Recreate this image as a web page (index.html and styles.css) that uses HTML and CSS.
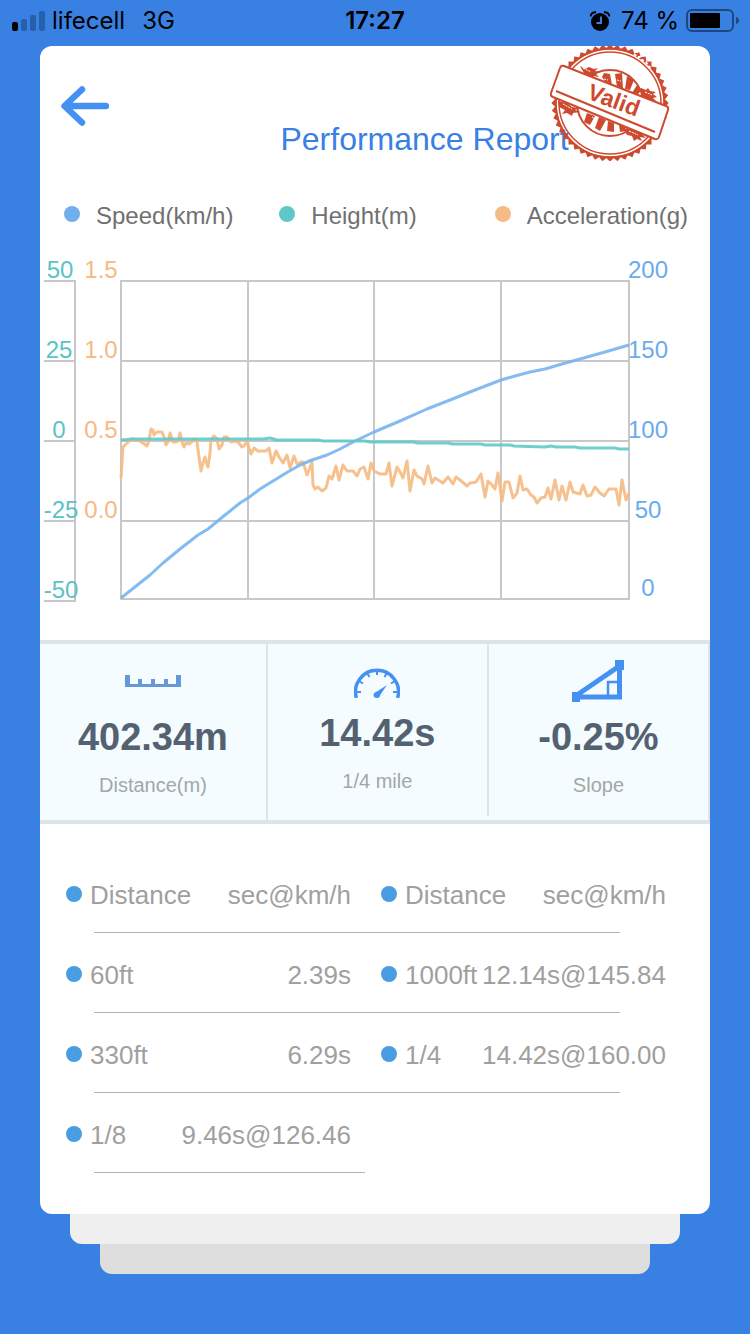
FILE: index.html
```html
<!DOCTYPE html>
<html lang="en">
<head>
  <meta charset="UTF-8">
  <meta name="viewport" content="width=device-width, initial-scale=1">
  <title>Performance Report</title>
  <link rel="stylesheet" href="styles.css">
</head>
<body>

  <div class="status-bar">
    <div class="status-left">
      <svg class="signal" width="34" height="20" viewBox="0 0 34 20" aria-hidden="true">
        <rect x="1" y="11" width="6" height="9" rx="2" fill="#000"/>
        <rect x="10" y="8" width="6" height="12" rx="2" fill="#2760aa"/>
        <rect x="19" y="4" width="6" height="16" rx="2" fill="#2760aa"/>
        <rect x="28" y="0" width="6" height="20" rx="2" fill="#2760aa"/>
      </svg>
      <span>lifecell</span>
      <span class="network">3G</span>
    </div>
    <div class="status-time">17:27</div>
    <div class="status-right">
      <svg width="20" height="20" viewBox="0 0 20 20" aria-hidden="true">
        <circle cx="10" cy="11" r="9"/>
        <path d="M0.500 5.500Q1 1.500 6 1M14 1Q19 1.500 19.500 5.500" fill="none" stroke="#000" stroke-width="2"/>
        <path d="M11 5.500V12H6.500" fill="none" stroke="#3880e2" stroke-width="2"/>
      </svg>
      <span>74 %</span>
      <svg width="53" height="24" viewBox="0 0 53 24" aria-hidden="true">
        <rect x="1" y="1" width="46" height="21" rx="5" fill="none" stroke="#1f477e" stroke-width="2"/>
        <rect x="4" y="4" width="30" height="15" rx="1"/>
        <path d="M50 8Q53 9 53 11.500T50 15Z" fill="#1f477e"/>
      </svg>
    </div>
  </div>

  <main class="card">
    <header class="card-header">
      <button type="button" class="back" aria-label="Back">
        <svg width="48" height="40" viewBox="0 0 48 40">
          <path d="M21 3.500L3.500 20L21 36.500M4 20H45" fill="none" stroke="#4591f2" stroke-width="6.500" stroke-linecap="round" stroke-linejoin="round"/>
        </svg>
      </button>
      <h1>Performance Report</h1>

      <svg class="stamp" width="120" height="115" viewBox="0 0 120 115">
        <defs>
          <mask id="rim">
            <rect width="120" height="115" fill="#fff"/>
            <circle cx="60" cy="57" r="53.500" fill="#000"/>
          </mask>
          <rect id="tooth" x="18.500" y="15.500" width="83" height="83"/>
        </defs>
        <g fill="#cd4a2f" mask="url(#rim)">
          <use href="#tooth"/>
          <use href="#tooth" transform="rotate(7.5 60 57)"/>
          <use href="#tooth" transform="rotate(15 60 57)"/>
          <use href="#tooth" transform="rotate(22.5 60 57)"/>
          <use href="#tooth" transform="rotate(30 60 57)"/>
          <use href="#tooth" transform="rotate(37.5 60 57)"/>
          <use href="#tooth" transform="rotate(45 60 57)"/>
          <use href="#tooth" transform="rotate(52.5 60 57)"/>
          <use href="#tooth" transform="rotate(60 60 57)"/>
          <use href="#tooth" transform="rotate(67.5 60 57)"/>
          <use href="#tooth" transform="rotate(75 60 57)"/>
          <use href="#tooth" transform="rotate(82.5 60 57)"/>
        </g>
        <g fill="none" stroke="#cd4a2f">
          <circle cx="60" cy="57" r="54" stroke-width="1.500"/>
          <circle cx="60" cy="57" r="51" stroke-width="1.500"/>
          <circle cx="60" cy="57" r="33" stroke-width="2"/>
        </g>
        <path d="M84 8l3 3 3 0 2 3 4 2 2 4 4 3" fill="none" stroke="#fff" stroke-width="2" stroke-dasharray="3 2"/>
        <!-- rays and worn ink -->
        <g fill="#cd4a2f">
          <path d="M52 31l2-4 6 1 2 11-6-2zM65 28l7-1 1 16-6-2zM77 30l7 4-4 10-5-1zM87 39l5 5-5 5-5-2z"/>
          <path d="M37 67l8 3-5 9-6-3zM49 71l7 3-6 11-5-3zM58 75l6 2v9l-7-1zM69 79l6 2 1 4-6 1z"/>
          <path d="M30 20l5 3 4-2 5 2 4-1-3 3 5 1-4 2 3 3-5-1-3 3-5-3-6-2 4-1z"/>
          <path d="M91 42l5 2 2-2 2 3 6 1-3 2 4 3-4 1 3 3-6-1-4 1-7-3 2-3z"/>
          <path d="M8 55l9 2 5 4 7 1-4 2 5 2-7 1-1 3-5-3-5 1 3-4-6-3z"/>
          <path d="M73 83l6-1 6 3 6-1 4 2-4 1 5 5-6-1 2 4-5-2-3 2-2-5-5-1z"/>
        </g>
        <path d="M33 22l8 4M95 46l7 3M13 58l9 5M79 85l9 4M54 33l4 1M67 34l4 1M42 71l3 2" stroke="#fff" stroke-dasharray="2 1"/>
        <path d="M14 20L116 60Q119 61 118 64L109 91Q108 94 105 93L3 51Q0 50 1 47L10 22Q11 19 14 20Z" fill="#fff" stroke="#cd4a2f" stroke-width="2"/>
        <path d="M6 45L105 86" stroke="#cd4a2f" stroke-width="2"/>
        <text class="stamp-text" x="64" y="62" text-anchor="middle" transform="rotate(20 64 54)">Valid</text>
      </svg>
    </header>

    <ul class="legend">
      <li class="speed">Speed(km/h)</li>
      <li class="height">Height(m)</li>
      <li class="accel">Acceleration(g)</li>
    </ul>

    <svg class="chart" viewBox="40 250 670 360" role="img" aria-label="Speed, height and acceleration">
      <path class="grid" d="M44 281H76M44 361H76M44 441H76M44 521H76M44 601H76M75 280V602"/>
      <path class="grid" d="M120 281H630M120 361H630M120 441H630M120 521H630M120 599H630"/>
      <path class="grid" d="M121 281V599M248 281V599M374 281V599M501 281V599M629 281V599"/>

      <g class="axis axis-height">
        <text x="60" y="278">50</text>
        <text x="59" y="358">25</text>
        <text x="59" y="438">0</text>
        <text x="61" y="518">-25</text>
        <text x="61" y="598">-50</text>
      </g>
      <g class="axis axis-accel">
        <text x="101" y="278">1.5</text>
        <text x="101" y="358">1.0</text>
        <text x="101" y="438">0.5</text>
        <text x="101" y="518">0.0</text>
      </g>
      <g class="axis axis-speed">
        <text x="648" y="278">200</text>
        <text x="648" y="358">150</text>
        <text x="648" y="438">100</text>
        <text x="648" y="518">50</text>
        <text x="648" y="596">0</text>
      </g>

      <polyline class="line line-accel" points="121,478 123,447 127,443 132,439 140,441 143,443 147,446 149,440 151,429 153,430 154,435 157,432 162,432 164,437 166,445 168,442 170,433 173,442 176,442 178,441 180,433 182,442 184,447 186,443 189,444 195,439 197,442 199,457 201,471 203,463 205,457 206,461 208,467 210,453 211,440 214,436 217,439 219,449 222,445 224,437 227,437 231,442 235,441 239,443 242,447 244,446 247,441 249,448 251,454 254,448 258,451 266,451 269,448 272,463 276,451 279,457 283,463 287,455 290,468 294,456 297,464 301,462 303,462 307,475 309,470 312,462 313,485 315,489 318,487 322,491 326,488 329,476 332,479 336,466 339,480 343,465 347,471 353,471 357,476 360,469 364,467 368,479 371,463 374,471 380,474 386,474 389,463 392,486 397,467 400,472 403,478 407,461 410,491 414,470 417,476 422,479 424,484 428,466 432,483 435,478 443,483 448,477 453,484 456,477 460,480 467,486 470,483 476,482 481,474 485,497 488,481 492,485 495,489 498,473 502,501 505,482 509,482 513,498 517,493 520,476 523,490 527,489 531,495 534,497 537,503 541,498 545,497 548,488 551,499 555,480 559,500 562,486 566,500 570,482 573,492 580,494 583,485 587,496 591,495 595,487 600,493 604,496 609,489 616,489 619,505 622,480 626,500 629,493"/>
      <polyline class="line line-speed" points="121,598 150,575 163,563 180,549 198,535 208,529 225,515 240,503 248,498 260,489 273,481 286,473 300,465 312,460 327,455 340,449 355,441 374,432 400,421 427,409 450,400 475,390 501,380 515,376 530,372 545,369 562,364 580,359 605,352 629,345"/>
      <polyline class="line line-height" points="121,440 132,439 263,439 270,438 277,440 318,440 323,441 365,441 370,442 413,442 418,443 448,443 453,444 481,444 485,445 510,445 514,446 545,447 551,446 556,447 575,447 580,448 615,448 619,449 629,449"/>
    </svg>

    <section class="stats">
      <div class="stat">
        <div class="stat-icon">
          <svg width="56" height="12" viewBox="0 0 56 12" aria-hidden="true">
            <path d="M0 0H5V9H13V4H17V9H26V4H30V9H39V4H43V9H51V0H56V12H0Z" fill="#6498d6"/>
          </svg>
        </div>
        <strong>402.34m</strong>
        <span>Distance(m)</span>
      </div>
      <div class="stat stat-middle">
        <div class="stat-icon">
          <svg width="46" height="30" viewBox="0 0 46 30" aria-hidden="true">
            <g fill="none" stroke="#4591f2">
              <path d="M2.400 30A21.500 21.500 0 1 1 43.600 30" stroke-width="3.500"/>
              <path d="M23 2V7M13 5L15.500 9M33 5L30.500 9M5 13L9 15.500M41 13L37 15.500M2 24H7M44 24H39" stroke-width="2"/>
            </g>
            <path d="M33 17L26.500 26.500Q26 30 23 30Q19.500 30 19.500 27Q20 24 23 23.500Z" fill="#4591f2"/>
          </svg>
        </div>
        <strong>14.42s</strong>
        <span>1/4 mile</span>
      </div>
      <div class="stat">
        <div class="stat-icon">
          <svg width="52" height="42" viewBox="0 0 52 42" aria-hidden="true">
            <path d="M5 35L47.500 6V37H4" fill="none" stroke="#4591f2" stroke-width="5"/>
            <path d="M0 32H8V42H0ZM43 0H52V10H43Z" fill="#4591f2"/>
            <path d="M36 36V22H47" fill="none" stroke="#4591f2" stroke-width="2.500"/>
          </svg>
        </div>
        <strong>-0.25%</strong>
        <span>Slope</span>
      </div>
    </section>

    <table class="splits">
      <tr>
        <th scope="col" class="name">Distance</th>
        <th scope="col" class="value">sec@km/h</th>
        <th scope="col" class="name">Distance</th>
        <th scope="col" class="value">sec@km/h</th>
      </tr>
      <tr>
        <td class="name">60ft</td>
        <td class="value">2.39s</td>
        <td class="name">1000ft</td>
        <td class="value">12.14s@145.84</td>
      </tr>
      <tr>
        <td class="name">330ft</td>
        <td class="value">6.29s</td>
        <td class="name">1/4</td>
        <td class="value">14.42s@160.00</td>
      </tr>
      <tr class="half">
        <td class="name">1/8</td>
        <td class="value">9.46s@126.46</td>
        <td></td>
        <td></td>
      </tr>
    </table>
  </main>
  <div class="sheet sheet-1"></div>
  <div class="sheet sheet-2"></div>

</body>
</html>
```
FILE: styles.css
```css
* {
  box-sizing: border-box;
}
body {
  margin: 0;
  min-height: 100vh;
  padding-bottom: 60px;
  background-color: #3880e2;
  font-family: "Liberation Sans", Arial, sans-serif;
}

/* phone status bar */
.status-bar {
  display: grid;
  grid-template-columns: 1fr auto 1fr;
  align-items: center;
  height: 46px;
  padding: 0 11px 5px;
  color: #000;
  font-family: Inter, sans-serif;
  font-size: 24px;
}
.status-left, .status-right {
  display: flex;
  align-items: center;
  gap: 7px;
}
.status-right {
  justify-content: flex-end;
}
.status-right span {
  margin-left: 4px;
}
.network {
  margin-left: 10px;
}
.status-time {
  font-weight: 600;
}

.card {
  margin: 0 40px;
  padding-bottom: 41px;
  border-radius: 12px;
  background-color: #fff;
}
.card-header {
  position: relative;
  display: flex;
  padding: 40px 0 0 21px;
}
.back {
  width: 48px;
  height: 40px;
  padding: 0;
  border: none;
  background: none;
}
.back svg {
  display: block;
}
h1 {
  flex: 1;
  margin: 33px 0 0;
  padding-left: 30px;
  color: #3880e2;
  font-size: 32px;
  font-weight: normal;
  line-height: 40px;
  text-align: center;
}
.stamp {
  position: absolute;
  top: 0;
  right: 40px;
}
.stamp-text {
  fill: #cd4a2f;
  font-size: 23px;
  font-weight: bold;
}

.legend {
  display: grid;
  grid-template-columns: repeat(3, 1fr);
  margin: 41px 0 18px;
  padding: 0 0 0 24px;
  list-style: none;
  color: #707070;
  font-size: 24px;
  line-height: 32px;
  white-space: nowrap;
}
.legend li {
  display: flex;
  gap: 16px;
}
.legend li::before {
  content: "";
  width: 16px;
  height: 16px;
  margin-top: 6px;
  border-radius: 50%;
}
.speed::before {
  background-color: #70aeec;
}
.height::before {
  background-color: #60c7c9;
}
.accel::before {
  background-color: #f5bb86;
}

.chart {
  display: block;
  width: 100%;
}
.grid {
  fill: none;
  stroke: #c8c8c8;
  stroke-width: 2;
}
.axis {
  font-size: 24px;
  text-anchor: middle;
}
.axis-height {
  fill: #5ac3c5;
}
.axis-accel {
  fill: #f7b97f;
}
.axis-speed {
  fill: #69acee;
}
.line {
  fill: none;
  stroke-width: 3;
  stroke-linejoin: round;
  opacity: 0.9;
}
.line-accel {
  stroke: #f5ba82;
}
.line-speed {
  stroke: #78b4f0;
}
.line-height {
  stroke: #5fcaca;
}

.stats {
  display: grid;
  grid-template-columns: 34% 33% 33%;
  margin-top: 30px;
  border-top: 4px solid #dbe4e6;
  border-bottom: 4px solid #dbe4e6;
  background-color: #f4fcff;
}
.stat {
  display: flex;
  flex-direction: column;
  align-items: center;
  padding: 16px 0 23px;
  border-right: 2px solid #dbe4e6;
}
.stat-icon {
  display: flex;
  align-items: center;
  height: 42px;
}
.stat-middle {
  margin-bottom: 4px;
  padding-top: 12px;
}
.stat-middle .stat-icon {
  align-items: flex-end;
}
.stat strong {
  margin-top: 11px;
  color: #536171;
  font-size: 38px;
  line-height: 48px;
}
.stat span {
  margin-top: 12px;
  color: #a4a6a7;
  font-size: 20px;
  line-height: 24px;
}

.splits {
  width: calc(100% - 70px);
  margin: 29px 44px 0 26px;
  border-collapse: collapse;
  table-layout: fixed;
  color: #a0a0a0;
  font-size: 26px;
  white-space: nowrap;
}
.splits tr {
  height: 80px;
  background: linear-gradient(#b4b4b4, #b4b4b4) no-repeat 28px 100% / calc(100% - 74px) 1px;
}
.splits .half {
  background-size: 271px 1px;
}
.splits th, .splits td {
  padding: 4px 0 0;
  font-weight: normal;
}
.splits .name {
  width: 19%;
  text-align: left;
}
.splits .name::before {
  content: "";
  display: inline-block;
  width: 16px;
  height: 16px;
  margin-right: 8px;
  border-radius: 50%;
  background-color: #4a9de2;
  vertical-align: 2px;
}
.splits .value {
  width: 31%;
  text-align: right;
}
.splits .value:nth-child(2) {
  padding-right: 15px;
}
.splits .name:nth-child(3) {
  padding-left: 15px;
}

/* sheets stacked below the card */
.sheet {
  height: 30px;
  border-radius: 0 0 12px 12px;
}
.sheet-1 {
  margin: 0 70px;
  background-color: #efefef;
}
.sheet-2 {
  margin: 0 100px;
  background-color: #dedede;
}
```
